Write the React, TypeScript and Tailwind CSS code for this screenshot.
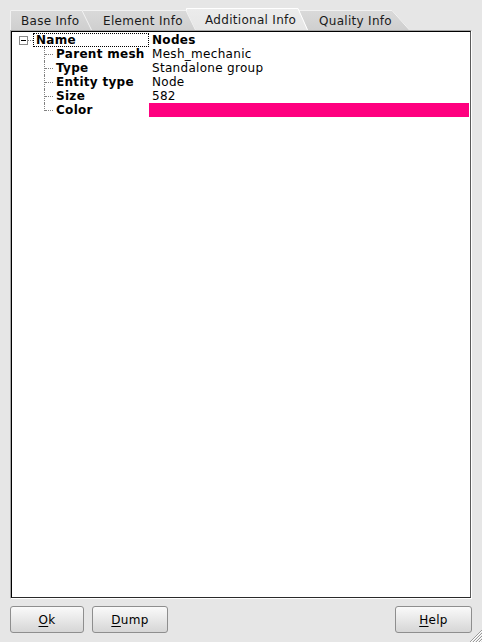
import React from 'react';

type Tab = { label: string; left: number; width: number; slant: number; pl: number; z: string };

const tabs: Tab[] = [
  { label: 'Base Info', left: 0, width: 82, slant: 10, pl: 11, z: 'z-40' },
  { label: 'Element Info', left: -10, width: 114, slant: 10, pl: 21, z: 'z-30' },
  { label: 'Additional Info', left: -10, width: 122, slant: 10, pl: 19, z: 'z-20' },
  { label: 'Quality Info', left: -10, width: 112, slant: 18, pl: 21, z: 'z-10' },
];

const rows = [
  { label: 'Parent mesh', value: 'Mesh_mechanic' },
  { label: 'Type', value: 'Standalone group' },
  { label: 'Entity type', value: 'Node' },
  { label: 'Size', value: '582' },
  { label: 'Color', value: '' },
];

function TabItem({ tab, index, active }: { tab: Tab; index: number; active: boolean }) {
  const h = active ? 22 : 20;
  const w = tab.width;
  const s = tab.slant;
  const gid = `tabgrad${index}`;
  return (
    <div
      className={`relative shrink-0 ${tab.z}`}
      style={{ width: w, height: h, marginLeft: tab.left }}
    >
      <svg className="absolute inset-0" width={w} height={h}>
        <defs>
          <linearGradient id={gid} x1="0" y1="0" x2="0" y2="1">
            <stop offset="0" stopColor={active ? '#ececec' : '#dadada'} />
            <stop offset="1" stopColor={active ? '#e6e6e6' : '#cfcfcf'} />
          </linearGradient>
        </defs>
        <polygon points={`0,0 ${w - s},0 ${w},${h} 0,${h}`} fill={`url(#${gid})`} />
        <polyline
          points={`0.5,${h} 0.5,0.5 ${w - s},0.5 ${w - 0.5},${h}`}
          fill="none"
          stroke={active ? '#ffffff' : '#f2f2f2'}
          strokeWidth="1"
        />
      </svg>
      <div
        className={`relative leading-[20px] whitespace-nowrap text-[#1a1a1a] ${active ? 'pt-[2px]' : 'pt-[1px]'}`}
        style={{ paddingLeft: tab.pl }}
      >
        {tab.label}
      </div>
    </div>
  );
}

function Branch({ last }: { last: boolean }) {
  return (
    <div className="relative w-[9px] h-[14px] shrink-0">
      <div
        className={`absolute left-0 top-0 border-l border-dotted border-[#808080] ${last ? 'h-[8px]' : 'h-[14px]'}`}
      />
      <div className="absolute left-[1px] top-[7px] w-[8px] border-t border-dotted border-[#808080]" />
    </div>
  );
}

function Button({ first, rest, width }: { first: string; rest: string; width: string }) {
  return (
    <button
      className={`${width} h-[27px] rounded-[3px] border border-[#8e8e8e] bg-gradient-to-b from-[#fafafa] to-[#d6d6d6] text-[12px] text-black flex items-center justify-center`}
    >
      <span>
        <span className="underline underline-offset-2">{first}</span>
        {rest}
      </span>
    </button>
  );
}

export default function App() {
  return (
    <div className="relative w-[482px] h-[642px] bg-[#e6e6e6] font-['DejaVu_Sans',sans-serif] text-[12px] tracking-[0.3px] text-black overflow-hidden">
      {/* tab bar */}
      <div className="h-[30px] pl-[10px] flex items-end">
        {tabs.map((t, i) => (
          <TabItem key={t.label} tab={t} index={i} active={i === 2} />
        ))}
      </div>

      {/* tree view */}
      <div className="mx-[10px] h-[569px] border border-t-[#a6a6a6] border-l-[#a6a6a6] border-r-white border-b-white">
        <div className="h-full border border-t-black border-l-black border-r-[#5a5a5a] border-b-[#2a2a2a] bg-white pt-[1px] pr-[1px]">
          {/* top level row */}
          <div className="flex h-[14px] leading-[14px]">
            <div className="w-[137px] shrink-0 flex items-center">
              <div className="ml-[7px] w-[9px] h-[9px] border border-[#8a8a8a] bg-white flex items-center justify-center shrink-0">
                <div className="w-[5px] h-[1px] bg-black" />
              </div>
              <div className="w-[5px] border-t border-dotted border-[#808080]" />
              <div className="w-[116px] h-[14px] border border-dotted border-black pl-[2px] font-bold leading-[12px]">
                Name
              </div>
            </div>
            <div className="flex-1 pl-[3px] font-bold">Nodes</div>
          </div>

          {rows.map((r, i) => (
            <div key={r.label} className="flex h-[14px] leading-[14px]">
              <div className="w-[137px] shrink-0 flex pl-[32px]">
                <Branch last={i === rows.length - 1} />
                <span className="ml-[3px] font-bold whitespace-nowrap">{r.label}</span>
              </div>
              {r.label === 'Color' ? (
                <div className="flex-1">
                  <div className="h-[14px] bg-[#ff007f]" />
                </div>
              ) : (
                <div className="flex-1 pl-[3px] whitespace-nowrap">{r.value}</div>
              )}
            </div>
          ))}
        </div>
      </div>

      {/* buttons */}
      <div className="flex px-[10px] mt-[7px] gap-[8px]">
        <Button first="O" rest="k" width="w-[74px]" />
        <Button first="D" rest="ump" width="w-[76px]" />
        <div className="flex-1" />
        <Button first="H" rest="elp" width="w-[77px]" />
      </div>

      {/* size grip */}
      <svg className="absolute right-0 bottom-0" width="13" height="13" viewBox="0 0 13 13">
        {[3, 6, 9, 12].map((o) => (
          <g key={o}>
            <line x1={13 - o} y1="13" x2="13" y2={13 - o} stroke="#9a9a9a" strokeWidth="1" />
            <line x1={14 - o} y1="13" x2="13" y2={14 - o} stroke="#ffffff" strokeWidth="1" />
          </g>
        ))}
      </svg>
    </div>
  );
}
